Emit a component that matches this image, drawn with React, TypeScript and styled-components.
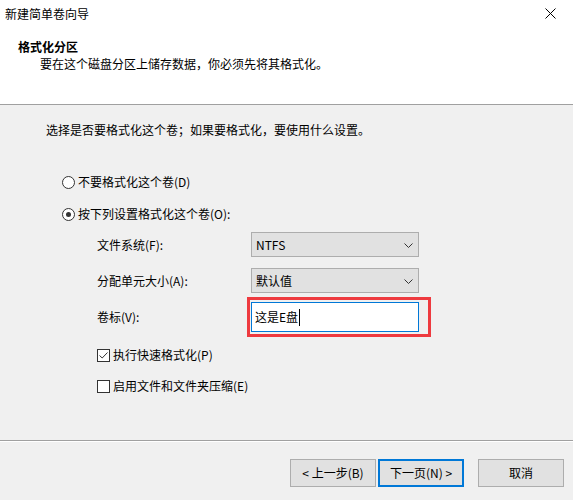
import React from 'react'
import styled, { createGlobalStyle } from 'styled-components'

const GlobalStyle = createGlobalStyle`
    html, body {
        margin: 0;
        padding: 0;
        background: #f0f0f0;
    }
    body {
        font-family: "Noto Sans CJK SC", "Noto Sans", "Liberation Sans", sans-serif;
        font-size: 12px;
        color: #000;
    }
`

const Window = styled.div`
    width: 573px;
    height: 500px;
    display: flex;
    flex-direction: column;
    background: #f0f0f0;
    overflow: hidden;
`

const Top = styled.div`
    background: #fff;
    height: 104px;
    border-bottom: 1px solid #a0a0a0;
    display: flex;
    flex-direction: column;
`

const TitleBar = styled.div`
    height: 27px;
    display: flex;
    align-items: center;
    justify-content: space-between;
    padding: 0 17px 0 5px;
    line-height: 16px;
`

const CloseIcon = styled.svg`
    width: 11px;
    height: 11px;
    display: block;
`

const Header = styled.div`
    display: flex;
    flex-direction: column;
    padding: 12px 0 0 18px;
    line-height: 16px;
`

const Heading = styled.div`
    font-weight: bold;
`

const Subtitle = styled.div`
    padding-left: 22px;
    margin-top: 1px;
`

const Body = styled.div`
    flex: 1;
    display: flex;
    flex-direction: column;
    padding: 17px 0 0 46px;
    line-height: 16px;
`

const Intro = styled.div``

const RadioRow = styled.label<{ $gap: number }>`
    display: flex;
    align-items: center;
    margin: ${p => p.$gap}px 0 0 16px;
    height: 16px;
`

const RadioDot = styled.span<{ $checked?: boolean }>`
    width: 11px;
    height: 11px;
    border: 1px solid #333;
    border-radius: 50%;
    background: #fff;
    margin-right: 3px;
    display: flex;
    align-items: center;
    justify-content: center;
    &::after {
        content: '';
        display: ${p => (p.$checked ? 'block' : 'none')};
        width: 5px;
        height: 5px;
        border-radius: 50%;
        background: #333;
    }
`

const Fields = styled.div`
    display: grid;
    grid-template-columns: 154px 168px;
    margin: 10px 0 0 51px;
`

const FieldLabel = styled.div<{ $gap: number }>`
    margin-top: ${p => p.$gap}px;
    display: flex;
    align-items: center;
`

const Select = styled.div<{ $gap: number }>`
    margin-top: ${p => p.$gap}px;
    height: 25px;
    box-sizing: border-box;
    border: 1px solid #adadad;
    background: #e1e1e1;
    display: flex;
    align-items: center;
    justify-content: space-between;
    padding: 0 5px 0 4px;
`

const Chevron = styled.svg`
    width: 9px;
    height: 5px;
    display: block;
    margin-top: 1px;
`

const InputWrap = styled.div<{ $gap: number }>`
    margin-top: ${p => p.$gap}px;
    position: relative;
`

const TextInput = styled.div`
    height: 30px;
    box-sizing: border-box;
    border: 1px solid #0078d7;
    background: #fff;
    display: flex;
    align-items: center;
    padding-left: 3px;
`

const Caret = styled.span`
    display: inline-block;
    width: 1px;
    height: 17px;
    background: #000;
    margin-left: 1px;
`

const Highlight = styled.div`
    position: absolute;
    top: -5px;
    left: -4px;
    right: -12px;
    bottom: -5px;
    border: 3px solid #ee3a3f;
    pointer-events: none;
`

const CheckRow = styled.label<{ $gap: number }>`
    display: flex;
    align-items: center;
    height: 16px;
    margin: ${p => p.$gap}px 0 0 51px;
`

const CheckBox = styled.span`
    width: 11px;
    height: 11px;
    border: 1px solid #333;
    background: #fff;
    margin-right: 3px;
    display: flex;
    align-items: center;
    justify-content: center;
`

const Footer = styled.div`
    height: 60px;
    border-top: 1px solid #a0a0a0;
    box-shadow: inset 0 1px 0 #fff;
    display: flex;
    justify-content: flex-end;
    align-items: flex-start;
    padding: 18px 9px 0 0;
    box-sizing: border-box;
`

const Button = styled.button<{ $focused?: boolean; $gapLeft: number }>`
    width: 86px;
    height: 28px;
    margin-left: ${p => p.$gapLeft}px;
    box-sizing: border-box;
    border: ${p => (p.$focused ? '2px solid #0078d7' : '1px solid #adadad')};
    background: #e1e1e1;
    font-family: inherit;
    font-size: 12px;
    color: #000;
    padding: 0;
    line-height: 16px;
`

const App: React.FC = () => {
    return (
        <Window>
            <GlobalStyle />
            <Top>
                <TitleBar>
                    <span>新建简单卷向导</span>
                    <CloseIcon viewBox="0 0 11 11">
                        <path d="M0.5 0.5 L10.5 10.5 M10.5 0.5 L0.5 10.5" stroke="#000" strokeWidth="1" fill="none" />
                    </CloseIcon>
                </TitleBar>
                <Header>
                    <Heading>格式化分区</Heading>
                    <Subtitle>要在这个磁盘分区上储存数据，你必须先将其格式化。</Subtitle>
                </Header>
            </Top>
            <Body>
                <Intro>选择是否要格式化这个卷；如果要格式化，要使用什么设置。</Intro>
                <RadioRow $gap={36}>
                    <RadioDot />
                    不要格式化这个卷(D)
                </RadioRow>
                <RadioRow $gap={16}>
                    <RadioDot $checked />
                    按下列设置格式化这个卷(O):
                </RadioRow>
                <Fields>
                    <FieldLabel $gap={0}>文件系统(F):</FieldLabel>
                    <Select $gap={0}>
                        NTFS
                        <Chevron viewBox="0 0 9 5">
                            <path d="M0.5 0.5 L4.5 4.5 L8.5 0.5" stroke="#333" strokeWidth="1" fill="none" />
                        </Chevron>
                    </Select>
                    <FieldLabel $gap={11}>分配单元大小(A):</FieldLabel>
                    <Select $gap={11}>
                        默认值
                        <Chevron viewBox="0 0 9 5">
                            <path d="M0.5 0.5 L4.5 4.5 L8.5 0.5" stroke="#333" strokeWidth="1" fill="none" />
                        </Chevron>
                    </Select>
                    <FieldLabel $gap={9}>卷标(V):</FieldLabel>
                    <InputWrap $gap={9}>
                        <TextInput>
                            这是E盘
                            <Caret />
                        </TextInput>
                        <Highlight />
                    </InputWrap>
                </Fields>
                <CheckRow $gap={15}>
                    <CheckBox>
                        <svg width="9" height="7" viewBox="0 0 9 7">
                            <path d="M0.5 3.5 L3.2 6 L8.5 0.5" stroke="#333" strokeWidth="1" fill="none" />
                        </svg>
                    </CheckBox>
                    执行快速格式化(P)
                </CheckRow>
                <CheckRow $gap={15}>
                    <CheckBox />
                    启用文件和文件夹压缩(E)
                </CheckRow>
            </Body>
            <Footer>
                <Button $gapLeft={0}>&lt; 上一步(B)</Button>
                <Button $gapLeft={2} $focused>下一页(N) &gt;</Button>
                <Button $gapLeft={14}>取消</Button>
            </Footer>
        </Window>
    )
}

export default App
